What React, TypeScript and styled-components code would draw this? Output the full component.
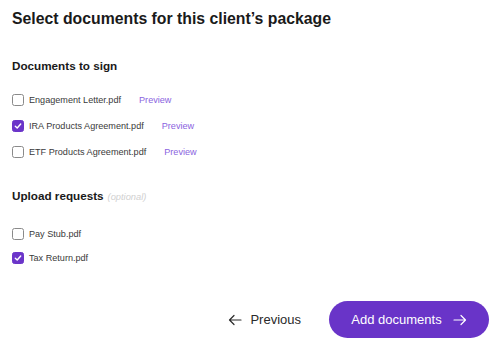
import styled, { createGlobalStyle } from "styled-components";

const GlobalStyle = createGlobalStyle`
body {
  margin: 0;
  background: #ffffff;
  font-family: "Liberation Sans", Arial, sans-serif;
  color: #1c1c1c;
}
`;

const Page = styled.div`
width: 500px;
height: 354px;
box-sizing: border-box;
padding: 9px 12px 0 12px;
display: flex;
flex-direction: column;
`;

const Title = styled.h1`
margin: 0;
font-size: 15.8px;
font-weight: 700;
color: #1a1a1a;
line-height: 20px;
`;

const Section = styled.section<{ top: number }>`
margin-top: ${(p) => p.top}px;
display: flex;
flex-direction: column;
`;

const SectionTitle = styled.h2<{ gap: number }>`
margin: 0 0 ${(p) => p.gap}px 0;
font-size: 11.7px;
font-weight: 700;
line-height: 16px;
color: #1a1a1a;
`;

const Optional = styled.span`
font-size: 9.3px;
font-style: italic;
font-weight: 400;
color: #d0d0d0;
margin-left: 4px;
`;

const Row = styled.label<{ h: number }>`
display: flex;
align-items: center;
height: ${(p) => p.h}px;
font-size: 9.1px;
color: #3a3a3a;
`;

const Box = styled.span<{ checked: boolean }>`
width: 12px;
height: 12px;
box-sizing: border-box;
border-radius: 2.5px;
border: 1px solid ${(p) => (p.checked ? "#6b35c9" : "#8a8a8a")};
background: ${(p) => (p.checked ? "#6b35c9" : "#fff")};
display: flex;
align-items: center;
justify-content: center;
margin-right: 5px;
`;

const Preview = styled.a`
margin-left: 18px;
color: #8a63e0;
font-size: 9.1px;
text-decoration: none;
`;

const Footer = styled.div`
margin-top: auto;
margin-bottom: 16px;
margin-right: -1px;
display: flex;
justify-content: flex-end;
align-items: center;
gap: 28px;
`;

const BackButton = styled.button`
border: none;
background: none;
padding: 0;
display: flex;
align-items: center;
gap: 8px;
font-family: inherit;
font-size: 13px;
color: #2a2a2a;
`;

const PrimaryButton = styled.button`
border: none;
background: #6934c8;
color: #fff;
height: 37px;
width: 160px;
border-radius: 19px;
display: flex;
align-items: center;
justify-content: center;
gap: 11px;
font-family: inherit;
font-size: 13px;
`;

const Check = () => (
  <svg width="8" height="8" viewBox="0 0 8 8">
    <path d="M1.3 4.2 L3.2 6 L6.7 2" fill="none" stroke="#fff" strokeWidth="1.4" strokeLinecap="round" strokeLinejoin="round" />
  </svg>
);

const Arrow = ({ left, color }: { left?: boolean; color: string }) => (
  <svg width="14" height="12" viewBox="0 0 14 12">
    {left ? (
      <path d="M13 6 H1.5 M6 1.5 L1.5 6 L6 10.5" fill="none" stroke={color} strokeWidth="1.2" strokeLinecap="round" strokeLinejoin="round" />
    ) : (
      <path d="M1 6 H12.5 M8 1.5 L12.5 6 L8 10.5" fill="none" stroke={color} strokeWidth="1.2" strokeLinecap="round" strokeLinejoin="round" />
    )}
  </svg>
);

const signDocs = [
  { name: "Engagement Letter.pdf", checked: false },
  { name: "IRA Products Agreement.pdf", checked: true },
  { name: "ETF Products Agreement.pdf", checked: false },
];

const uploads = [
  { name: "Pay Stub.pdf", checked: false },
  { name: "Tax Return.pdf", checked: true },
];

export default function App() {
  return (
    <Page>
      <GlobalStyle />
      <Title>Select documents for this client’s package</Title>
      <Section top={29}>
        <SectionTitle gap={13}>Documents to sign</SectionTitle>
        {signDocs.map((d) => (
          <Row key={d.name} h={26}>
            <Box checked={d.checked}>{d.checked && <Check />}</Box>
            {d.name}
            <Preview>Preview</Preview>
          </Row>
        ))}
      </Section>
      <Section top={23}>
        <SectionTitle gap={17}>
          Upload requests<Optional>(optional)</Optional>
        </SectionTitle>
        {uploads.map((d) => (
          <Row key={d.name} h={24}>
            <Box checked={d.checked}>{d.checked && <Check />}</Box>
            {d.name}
          </Row>
        ))}
      </Section>
      <Footer>
        <BackButton>
          <Arrow left color="#2a2a2a" />
          Previous
        </BackButton>
        <PrimaryButton>
          Add documents
          <Arrow color="#fff" />
        </PrimaryButton>
      </Footer>
    </Page>
  );
}
